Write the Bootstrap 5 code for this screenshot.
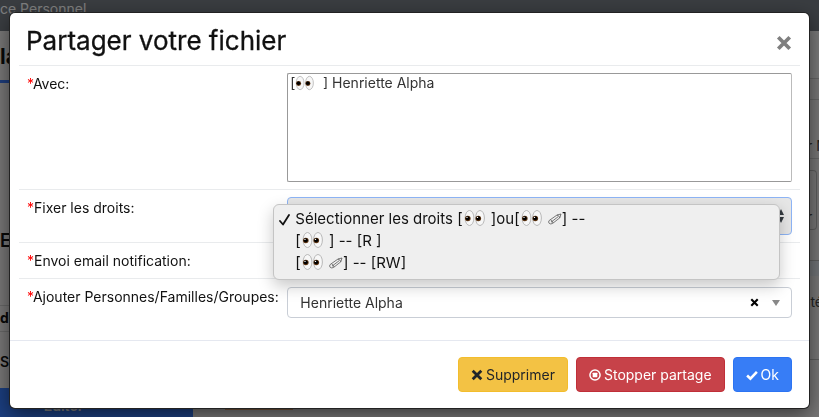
<!DOCTYPE html>
<html lang="fr">
<head>
<meta charset="utf-8">
<meta name="viewport" content="width=device-width, initial-scale=1">
<title>Partager votre fichier</title>
<link href="https://cdn.jsdelivr.net/npm/bootstrap@5.3.0/dist/css/bootstrap.min.css" rel="stylesheet">
<style>
body{font-family:Inter,"Liberation Sans",sans-serif;font-size:14px;line-height:20px;background:#f0eeee;color:#111;overflow:hidden}
.page-nav{background:#747b83;color:#fff;height:31px;line-height:18px}
.side-tab{height:52px;padding-top:12px;font-size:21px;line-height:28px;font-weight:700;border-bottom:3px solid #3d7bf8}
.side-head{height:223px;padding-top:144px;font-size:18px;line-height:28px;font-weight:600;border-bottom:1px solid #cfcfcf}
.side-name{height:26px;line-height:24px;font-weight:700;border-bottom:1px solid #cfcfcf}
.side-state{height:56px;padding-top:20px;font-weight:600}
.side-col{width:193px}
.edit-btn{border:0;border-radius:0;height:40px;background:#377dff;color:#fff;font-weight:600;padding:0 66px 4px 0}
.strip{width:68px;height:2px;background:#e8a878;margin-top:377px}
.right-col{width:12px;white-space:nowrap;overflow:hidden;color:#444;font-size:14px}
.right-a{height:48px;background:#f4f4f5;border-bottom:1px solid #ccc}
.right-b{height:21px;border-bottom:1px solid #ccc}
.right-c{height:59px;padding-top:36px;border-bottom:1px solid #ccc}
.right-d{height:60px;margin:11px 2px 0 0;padding-top:36px;border:1px solid #bbb;border-left:0;border-radius:0 4px 4px 0}
.right-e{height:31px;border-bottom:1px solid #bbb}
.right-f{height:15px;background:#e3e9ee}
.right-g{height:84px;padding-top:16px;border-bottom:1px solid #bbb}
.modal{padding:13px 10px 0}
.modal-dialog{max-width:none;margin:0}
.modal-content{border:0;border-radius:5px;box-shadow:0 0 0 1px #222,0 6px 20px rgba(0,0,0,.55);color:#111}
.share-head{padding:10px 17px 6px 16px}
.share-title{font-size:26px;line-height:36px;font-weight:400;color:#111;-webkit-text-stroke:.3px #111}
.close-x{width:16px;height:16px;margin-top:4px}
.icon-btn{border:0;background:none;padding:0;display:flex}
.form-lines{padding:0 9px}
.form-line{border-top:1px solid #e9ebed;white-space:nowrap}
.form-line>div{padding:7px 8px}
.form-line>.lab{padding-top:8px}
.form-line>.last-field{padding:8px 8px 22px}
.req{color:#f00}
.people{display:block;height:109px;border:1px solid #999;border-right-color:#bbb;color:#333;outline:0;overflow:hidden;background:#fff;padding:0}
.people option{padding:0 2px;min-height:18px;line-height:18px;background:url("data:image/svg+xml,%3Csvg xmlns='http://www.w3.org/2000/svg' viewBox='0 0 22 18'%3E%3Cg fill='%23f7f7f7' stroke='%23aaa' stroke-width='.8'%3E%3Cellipse cx='5.5' cy='9' rx='4.4' ry='7.5'/%3E%3Cellipse cx='16' cy='9' rx='4.4' ry='7.5'/%3E%3C/g%3E%3Cg fill='%235c3310'%3E%3Ccircle cx='3.8' cy='9.5' r='2.8'/%3E%3Ccircle cx='14.3' cy='9.5' r='2.8'/%3E%3C/g%3E%3Cg fill='%23000'%3E%3Ccircle cx='3.7' cy='9.3' r='2'/%3E%3Ccircle cx='14.2' cy='9.3' r='2'/%3E%3C/g%3E%3C/svg%3E") no-repeat 7px 1px/20px 16px}
.rights{display:block;height:38px;border:1px solid #8db4f5;border-radius:4px;color:#333;padding:0 12px;background:#e6e6e6 url("data:image/svg+xml,%3Csvg xmlns='http://www.w3.org/2000/svg' viewBox='0 0 6 14'%3E%3Cpath fill='%23343a40' d='M3 0 6 6H0zM3 14 6 8H0z'/%3E%3C/svg%3E") no-repeat right 7px center/6px 14px;appearance:none}
.rights-menu{position:absolute;z-index:5;top:14px;left:-6px;right:20px;padding:3px 0 5px;border:1px solid #c4c4c4;border-radius:6px;background:#efefef;box-shadow:0 6px 16px rgba(0,0,0,.22)}
.rights-menu button{display:flex;align-items:center;border:0;background:none;font-size:15px;line-height:22px;padding:0 0 0 21px;color:#111;white-space:pre}
.rights-menu .picked{padding-left:5px}
.eyes{width:24px;height:18px;margin-top:-3px}
.pen{width:14px;height:12px}
.tick{width:11px;height:13px;margin-right:5px}
.added{display:block;height:31px;border:1px solid #c9ced6;border-radius:4px;padding:0 12px;color:#333;appearance:none;background:#fff url("data:image/svg+xml,%3Csvg xmlns='http://www.w3.org/2000/svg' viewBox='0 0 8 6'%3E%3Cpath fill='%23888' d='M0 0h8L4 6z'/%3E%3C/svg%3E") no-repeat right 11px center/8px 6px}
.clear-x{position:absolute;right:41px;top:19px}
.clear-x svg{width:9px;height:9px}
.foot{border-top:1px solid #e5e8f0;padding:16px 17px}
.foot .btn{font-size:14px;line-height:22px;padding:6px 12px 5px;border-radius:4px;display:flex;align-items:center;gap:3px}
.foot svg{width:12px;height:12px}
.btn-drop{--bs-btn-bg:#f3c244;--bs-btn-border-color:#f3bd2c;--bs-btn-color:#212529}
.btn-stop{--bs-btn-bg:#c74249;--bs-btn-border-color:#c02f38;--bs-btn-color:#fff}
.btn-ok{--bs-btn-bg:#377df6;--bs-btn-border-color:#2c74f2;--bs-btn-color:#fff}
</style>
</head>
<body>
<svg class="d-none" xmlns="http://www.w3.org/2000/svg">
<symbol id="eyes" viewBox="0 0 22 18"><g fill="#f7f7f7" stroke="#aaa" stroke-width=".8"><ellipse cx="5.5" cy="9" rx="4.4" ry="7.5"/><ellipse cx="16" cy="9" rx="4.4" ry="7.5"/></g><g fill="#5c3310"><circle cx="3.8" cy="9.5" r="2.8"/><circle cx="14.3" cy="9.5" r="2.8"/></g><circle cx="3.7" cy="9.3" r="2"/><circle cx="14.2" cy="9.3" r="2"/><g fill="#fff"><circle cx="3" cy="8.4" r=".7"/><circle cx="13.5" cy="8.4" r=".7"/></g></symbol>
<symbol id="pen" viewBox="0 0 14 12"><path d="M1.200 7.500 9 2l4-1-1.200 3.800L4.500 10.500Q2.500 11.500 1.200 10.300T1.200 7.500zM3 9.200l7-5.400M9 2q2 .5 2.800 2.800M2.600 7q1.800.8 2.400 3" fill="none" stroke="#444" stroke-width=".7"/></symbol>
<symbol id="cross" viewBox="0 0 12 12"><path d="M1.700 1.700l8.600 8.600M10.300 1.700l-8.600 8.600" fill="none" stroke="currentColor" stroke-width="2.800"/></symbol>
</svg>
<header class="page-nav">ce Personnel</header>
<main class="d-flex">
<aside class="side-col"><div class="side-tab">la</div><div class="side-head">Ec</div><div class="side-name">de</div><div class="side-state">S</div><button class="edit-btn w-100" type="button">Editer</button></aside>
<div class="flex-fill px-4"><div class="strip ms-2"></div></div>
<div class="right-col"><div class="right-a"></div><div class="right-b"></div><div class="right-c">r M</div><div class="right-d">r</div><div class="right-e"></div><div class="right-f"></div><div class="right-g">ité</div></div>
</main>
<div class="modal-backdrop show"></div>
<div class="modal show d-block" role="dialog" aria-labelledby="ttl"><div class="modal-dialog"><form class="modal-content">
<div class="share-head d-flex justify-content-between align-items-center"><h1 id="ttl" class="share-title m-0">Partager votre fichier</h1><button type="button" class="icon-btn text-black-50" aria-label="Fermer"><svg class="close-x"><use href="#cross"/></svg></button></div>
<div class="form-lines">
<div class="row g-0 form-line"><div class="col-4 lab"><label for="people"><span class="req">*</span>Avec:</label></div><div class="col-8"><select id="people" class="people w-100" multiple><option>[&nbsp;&nbsp;&nbsp;&nbsp;&nbsp;&nbsp;&nbsp;] Henriette Alpha</option></select></div></div>
<div class="row g-0 form-line"><div class="col-4 lab"><label for="rights"><span class="req">*</span>Fixer les droits:</label></div>
<div class="col-8 position-relative"><select id="rights" class="rights w-100"><option aria-label="Sélectionner les droits"></option></select>
<div class="rights-menu" role="listbox" aria-label="Droits"><button type="button" class="picked" role="option" aria-selected="true"><svg class="tick" viewBox="0 0 11 13"><path d="M1 8l3 3.500L10 2" fill="none" stroke="#111" stroke-width="1.800" stroke-linecap="round" stroke-linejoin="round"/></svg><span>Sélectionner les droits [</span><svg class="eyes"><use href="#eyes"/></svg><span> ]ou[</span><svg class="eyes"><use href="#eyes"/></svg><span> </span><svg class="pen"><use href="#pen"/></svg><span>] --</span></button><button type="button" role="option"><span>[</span><svg class="eyes"><use href="#eyes"/></svg><span> ] -- [R ]</span></button><button type="button" role="option"><span>[</span><svg class="eyes"><use href="#eyes"/></svg><span> </span><svg class="pen"><use href="#pen"/></svg><span>] -- [RW]</span></button></div></div></div>
<div class="row g-0 form-line"><div class="col-4 lab"><span class="req">*</span>Envoi email notification:</div></div>
<div class="row g-0 form-line"><div class="col-4 lab"><label for="added"><span class="req">*</span>Ajouter Personnes/Familles/Groupes:</label></div><div class="col-8 last-field position-relative"><select id="added" class="added w-100"><option>Henriette Alpha</option></select><button type="button" class="icon-btn clear-x" aria-label="Effacer"><svg><use href="#cross"/></svg></button></div></div>
</div>
<div class="foot d-flex justify-content-end gap-2">
<button type="button" class="btn btn-drop"><svg><use href="#cross"/></svg>Supprimer</button>
<button type="button" class="btn btn-stop"><svg viewBox="0 0 13 13"><circle cx="6.500" cy="6.500" r="5.500" fill="none" stroke="#fff" stroke-width="1.600"/><rect x="4" y="4" width="5" height="5" rx=".5" fill="#fff"/></svg>Stopper partage</button>
<button type="submit" class="btn btn-ok"><svg viewBox="0 0 13 13"><path d="M1.200 7l3.600 3.500 7-7.300" fill="none" stroke="#fff" stroke-width="2.800"/></svg>Ok</button>
</div>
</form></div></div>
<script src="https://cdn.jsdelivr.net/npm/bootstrap@5.3.0/dist/js/bootstrap.bundle.min.js"></script>
</body>
</html>
